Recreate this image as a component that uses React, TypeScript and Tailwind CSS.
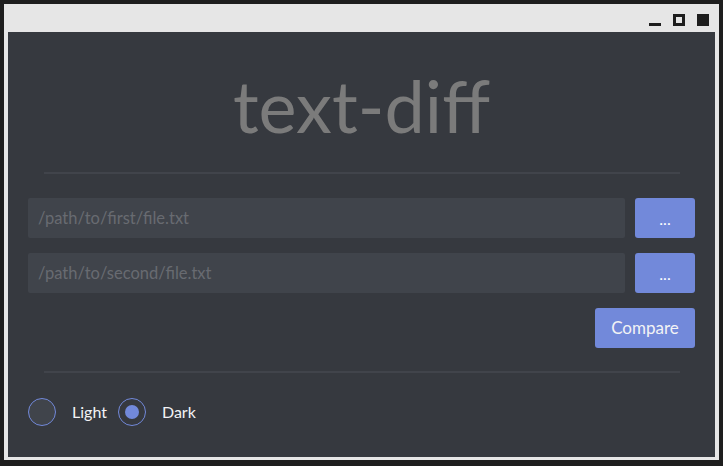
import React, { useState } from 'react';

const lato = { fontFamily: 'Lato, "Open Sans", sans-serif' };

function WindowControls() {
  return (
    <div className="flex h-[28px] items-start justify-end">
      <div className="mt-[19px] mr-[12px] h-[3px] w-[12px] bg-[#1e1e1e]" />
      <div className="mt-[10px] mr-[12px] h-[12px] w-[12px] border-[3px] border-[#1e1e1e]" />
      <div className="mt-[10px] mr-[6px] h-[12px] w-[12px] bg-[#1e1e1e]" />
    </div>
  );
}

function PathRow({ placeholder }: { placeholder: string }) {
  return (
    <div className="flex h-[40px] gap-[10px]">
      <input
        className="h-full flex-1 rounded-[2px] bg-[#40444b] px-[10px] text-[16.5px] text-[#dcddde] outline-none placeholder:text-[#686b71]"
        style={lato}
        placeholder={placeholder}
      />
      <button className="h-full w-[60px] rounded-[3px] bg-[#7289da] pt-[2px] text-[16px] text-white">...</button>
    </div>
  );
}

function Radio({ label, checked, onClick }: { label: string; checked: boolean; onClick: () => void }) {
  return (
    <button className="flex items-center" onClick={onClick}>
      <span
        className={
          checked
            ? 'flex h-[28px] w-[28px] items-center justify-center rounded-full border border-[#7289da] bg-[#36393f]'
            : 'flex h-[28px] w-[28px] items-center justify-center rounded-full border border-[#7289da] bg-[#40444b]'
        }
      >
        {checked && <span className="h-[14px] w-[14px] rounded-full bg-[#7289da]" />}
      </span>
      <span className="ml-[16px] mr-[11px] text-[16px] text-[#f2f3f5]">{label}</span>
    </button>
  );
}

export default function App() {
  const [theme, setTheme] = useState<'light' | 'dark'>('dark');

  return (
    <div className="h-[466px] w-[723px] bg-[#1e1e1e] pt-[4px] pr-[4px] pb-[6px] pl-[4px]" style={lato}>
      <div className="flex h-full flex-col bg-[#e6e6e6] pr-[4px] pb-[3px] pl-[4px]">
        <WindowControls />
        <div className="flex flex-1 flex-col bg-[#36393f] px-[20px]">
          <h1 className="mt-[30px] text-center text-[72px] leading-[86px] text-[#7b7b7b]">text-diff</h1>
          <div className="mx-auto mt-[24px] h-[2px] w-[636px] bg-[#41444b]" />
          <div className="mt-[24px] flex flex-col gap-[15px]">
            <PathRow placeholder="/path/to/first/file.txt" />
            <PathRow placeholder="/path/to/second/file.txt" />
            <div className="flex justify-end">
              <button className="h-[40px] w-[100px] rounded-[3px] bg-[#7289da] text-[17px] text-[#f2f3f5]">Compare</button>
            </div>
          </div>
          <div className="mx-auto mt-[23px] h-[2px] w-[636px] bg-[#41444b]" />
          <div className="mt-[25px] flex items-center">
            <Radio label="Light" checked={theme === 'light'} onClick={() => setTheme('light')} />
            <Radio label="Dark" checked={theme === 'dark'} onClick={() => setTheme('dark')} />
          </div>
        </div>
      </div>
    </div>
  );
}
